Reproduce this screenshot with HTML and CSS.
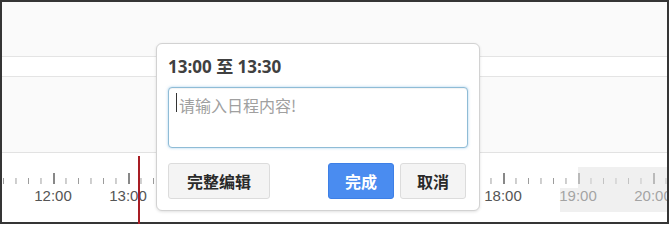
FILE: index.html
```html
<!DOCTYPE html>
<html lang="zh-CN">
<head>
<meta charset="utf-8">
<title>日程</title>
<link rel="stylesheet" href="styles.css">
</head>
<body>
<div class="frame">
  <div class="top-space"></div>
  <div class="band"></div>
  <div class="mid"></div>
  <div class="timeline">
    <div class="ticks"></div>
    <div class="labels">
      <span class="label">12:00</span>
      <span class="label">13:00</span>
      <span class="label label-covered"></span>
      <span class="label label-covered"></span>
      <span class="label label-covered"></span>
      <span class="label label-covered"></span>
      <span class="label">18:00</span>
      <span class="label">19:00</span>
      <span class="label">20:00</span>
    </div>
  </div>
  <div class="shade shade-main"></div>
  <div class="shade shade-label"></div>
  <div class="now-line"></div>

  <div class="popup">
    <div class="popup-title">13:00 至 13:30</div>
    <div class="input-wrap">
      <textarea class="input" placeholder="请输入日程内容!"></textarea>
      <span class="caret"></span>
    </div>
    <div class="actions">
      <button class="btn btn-default">完整编辑</button>
      <div class="actions-right">
        <button class="btn btn-primary">完成</button>
        <button class="btn btn-default btn-small">取消</button>
      </div>
    </div>
  </div>
</div>
</body>
</html>
```

FILE: styles.css
```css
* { box-sizing: border-box; }

html, body {
  margin: 0;
  padding: 0;
  background: #ffffff;
}

.frame {
  position: relative;
  width: 669px;
  height: 224px;
  border: 2px solid #353535;
  background: #fafafa;
  display: flex;
  flex-direction: column;
}

.top-space {
  height: 54px;
}

.band {
  height: 21px;
  background: #ffffff;
  border-top: 1px solid #e4e4e4;
  border-bottom: 1px solid #e4e4e4;
}

.mid {
  height: 75px;
  background: #fafafa;
}

.timeline {
  flex: 1;
  background: #ffffff;
  border-top: 1px solid #e2e2e2;
  overflow: hidden;
}

.ticks {
  height: 31px;
  background-image:
    linear-gradient(to right, #888888 2px, transparent 2px),
    linear-gradient(to right, #9a9a9a 1px, transparent 1px);
  background-size: 75px 11px, 12.5px 6px;
  background-position: 51px 100%, 1px 100%;
  background-repeat: repeat-x, repeat-x;
}

.labels {
  display: flex;
  margin-top: 3px;
  margin-left: 13.5px;
  height: 17px;
}

.label {
  flex: 0 0 75px;
  text-align: center;
  font-family: "Liberation Sans", Arial, sans-serif;
  font-size: 15px;
  line-height: 17px;
  color: #555555;
}

.shade {
  position: absolute;
  background: rgba(228, 228, 228, 0.55);
}

.shade-main {
  left: 576px;
  top: 165px;
  right: 0;
  height: 45px;
}

.shade-label {
  left: 558px;
  top: 186px;
  width: 18px;
  height: 24px;
}

.now-line {
  position: absolute;
  left: 136px;
  top: 154px;
  width: 2px;
  height: 68px;
  background: #a81d24;
}

.popup {
  position: absolute;
  left: 154px;
  top: 41px;
  width: 324px;
  background: #ffffff;
  border: 1px solid #d2d2d2;
  border-radius: 6px;
  box-shadow: 0 1px 3px rgba(0, 0, 0, 0.12);
  padding: 12px 11px 11px;
  font-family: "Open Sans", "Noto Sans CJK SC", sans-serif;
}

.popup-title {
  font-size: 17px;
  font-weight: 700;
  line-height: 22px;
  color: #404040;
  margin-bottom: 9px;
}

.input-wrap {
  position: relative;
  height: 61px;
}

.input {
  display: block;
  width: 300px;
  height: 61px;
  margin: 0;
  resize: none;
  border: 1px solid #8fbcd6;
  border-radius: 4px;
  box-shadow: 0 0 3px rgba(102, 170, 220, 0.55), inset 0 1px 1px rgba(0, 0, 0, 0.05);
  padding: 6px 10px;
  font-family: "Noto Sans CJK SC", sans-serif;
  font-size: 16px;
  line-height: 22px;
  color: #333333;
  outline: none;
  background: #ffffff;
}

.input::placeholder {
  color: #a0a0a0;
}

.caret {
  position: absolute;
  left: 8px;
  top: 6px;
  width: 1px;
  height: 19px;
  background: #333333;
}

.actions {
  display: flex;
  justify-content: space-between;
  margin-top: 15px;
}

.actions-right {
  display: flex;
  gap: 6px;
  margin-right: 2px;
}

.btn {
  height: 36px;
  margin: 0;
  border-radius: 3px;
  font-family: "Noto Sans CJK SC", sans-serif;
  font-size: 16px;
  font-weight: 700;
  line-height: 20px;
  padding: 0;
  cursor: pointer;
}

.btn-default {
  width: 102px;
  background: #f4f4f4;
  border: 1px solid #dcdcdc;
  color: #2a2a2a;
}

.btn-small {
  width: 66px;
}

.btn-primary {
  width: 66px;
  background: #4a8cf0;
  border: 1px solid #3d7fe6;
  color: #ffffff;
}
```
